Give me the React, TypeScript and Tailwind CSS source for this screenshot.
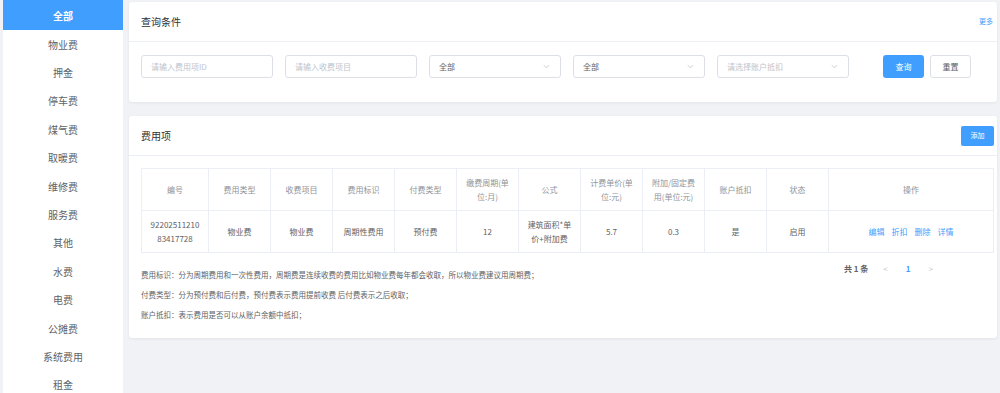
import React from 'react'

const menus = ['全部', '物业费', '押金', '停车费', '煤气费', '取暖费', '维修费', '服务费', '其他', '水费', '电费', '公摊费', '系统费用', '租金']

const cols = [
  { t: '编号', w: 'w-[67px]' },
  { t: '费用类型', w: 'w-[62px]' },
  { t: '收费项目', w: 'w-[62px]' },
  { t: '费用标识', w: 'w-[62px]' },
  { t: '付费类型', w: 'w-[62px]' },
  { t: '缴费周期(单位:月)', w: 'w-[62px]' },
  { t: '公式', w: 'w-[62px]' },
  { t: '计费单价(单位:元)', w: 'w-[62px]' },
  { t: '附加/固定费用(单位:元)', w: 'w-[62px]' },
  { t: '账户抵扣', w: 'w-[62px]' },
  { t: '状态', w: 'w-[62px]' },
  { t: '操作', w: 'flex-1' },
]

const row: React.ReactNode[] = [
  <>92202511210<br />83417728</>,
  '物业费', '物业费', '周期性费用', '预付费', '12', '建筑面积*单价+附加费', '5.7', '0.3', '是', '启用',
]

function Chevron() {
  return (
    <svg width="9" height="9" viewBox="0 0 10 10" className="text-[#c0c4cc]">
      <path d="M2 3.5 L5 6.5 L8 3.5" fill="none" stroke="currentColor" strokeWidth="0.9" />
    </svg>
  )
}

function Input({ ph }: { ph: string }) {
  return (
    <div className="w-[132px] h-[23px] border border-[#dcdfe6] rounded-[3px] bg-white flex items-center px-[9px] text-[8px] text-[#c0c4cc]">
      {ph}
    </div>
  )
}

function Select({ v, ph }: { v: string; ph?: boolean }) {
  return (
    <div className={`w-[132px] h-[23px] border border-[#dcdfe6] rounded-[3px] bg-white flex items-center justify-between px-[9px] text-[8px] ${ph ? 'text-[#c0c4cc]' : 'text-[#606266]'}`}>
      <span>{v}</span>
      <Chevron />
    </div>
  )
}

export default function App() {
  return (
    <div className="w-[1000px] h-[393px] bg-[#f0f2f5] flex overflow-hidden" style={{ fontFamily: '"Noto Sans CJK SC", "Noto Sans", sans-serif' }}>
      <div className="w-[120px] ml-[3px] bg-white flex flex-col">
        {menus.map((m, i) => (
          <div key={m} className={`h-[28.4px] shrink-0 flex items-center justify-center text-[10px] ${i === 0 ? 'bg-[#409eff] text-white font-bold h-[30px]' : 'text-[#606266]'}`}>
            {m}
          </div>
        ))}
      </div>
      <div className="flex-1 ml-[6px] mr-[3px] flex flex-col">
        <div className="mt-[2px] bg-white rounded-[3px] shadow-[0_1px_3px_rgba(0,0,0,0.06)] h-[100px] flex flex-col">
          <div className="h-[40px] flex items-center justify-between px-[12px] border-b border-[#ebeef5]">
            <span className="text-[10px] text-[#303133]">查询条件</span>
            <span className="text-[7px] text-[#409eff] mr-[-8px]">更多</span>
          </div>
          <div className="flex items-center pl-[12px] mt-[13px] gap-[12px]">
            <Input ph="请输入费用项ID" />
            <Input ph="请输入收费项目" />
            <Select v="全部" />
            <Select v="全部" />
            <Select v="请选择账户抵扣" ph />
            <div className="flex gap-[6px] ml-[22px]">
              <div className="w-[41px] h-[23px] bg-[#409eff] rounded-[3px] text-white text-[8px] flex items-center justify-center">查询</div>
              <div className="w-[41px] h-[23px] border border-[#dcdfe6] rounded-[3px] text-[#606266] text-[8px] flex items-center justify-center">重置</div>
            </div>
          </div>
        </div>
        <div className="mt-[14px] bg-white rounded-[3px] shadow-[0_1px_3px_rgba(0,0,0,0.06)] h-[222px] flex flex-col">
          <div className="h-[40px] flex items-center justify-between px-[12px] pr-[3px] border-b border-[#ebeef5]">
            <span className="text-[10px] text-[#303133]">费用项</span>
            <div className="w-[33px] h-[20px] bg-[#409eff] rounded-[2px] text-white text-[7px] flex items-center justify-center">添加</div>
          </div>
          <div className="mx-[12px] mr-[3px] mt-[12px] border-t border-l border-[#ebeef5]">
            <div className="flex h-[42px]">
              {cols.map(c => (
                <div key={c.t} className={`${c.w} border-r border-b border-[#ebeef5] flex items-center justify-center text-center px-[6px] text-[8px] leading-[14px] text-[#909399]`}>
                  {c.t}
                </div>
              ))}
            </div>
            <div className="flex h-[42px]">
              {row.map((v, i) => (
                <div key={i} className={`${cols[i].w} border-r border-b border-[#ebeef5] flex items-center justify-center text-center px-[6px] text-[8px] leading-[14px] text-[#606266] break-all`}>
                  {v}
                </div>
              ))}
              <div className="flex-1 border-r border-b border-[#ebeef5] flex items-center justify-center gap-[7px] text-[8px] text-[#409eff]">
                <span>编辑</span>
                <span>折扣</span>
                <span>删除</span>
                <span>详情</span>
              </div>
            </div>
          </div>
          <div className="flex justify-between pl-[12px] mt-[12px]">
            <div className="flex flex-col gap-[8px] text-[7.5px] text-[#606266] leading-[12px] mt-[4px]">
              <span>费用标识：分为周期费用和一次性费用，周期费是连续收费的费用比如物业费每年都会收取，所以物业费建议用周期费；</span>
              <span>付费类型：分为预付费和后付费，预付费表示费用提前收费 后付费表示之后收取；</span>
              <span>账户抵扣：表示费用是否可以从账户余额中抵扣；</span>
            </div>
            <div className="flex items-start text-[8px] mr-[64px] mt-[-2px]">
              <span className="text-[#606266] font-bold">共 1 条</span>
              <span className="text-[#c0c4cc] ml-[15px]">&lt;</span>
              <span className="text-[#409eff] font-bold ml-[18px]">1</span>
              <span className="text-[#c0c4cc] ml-[18px]">&gt;</span>
            </div>
          </div>
        </div>
      </div>
    </div>
  )
}
